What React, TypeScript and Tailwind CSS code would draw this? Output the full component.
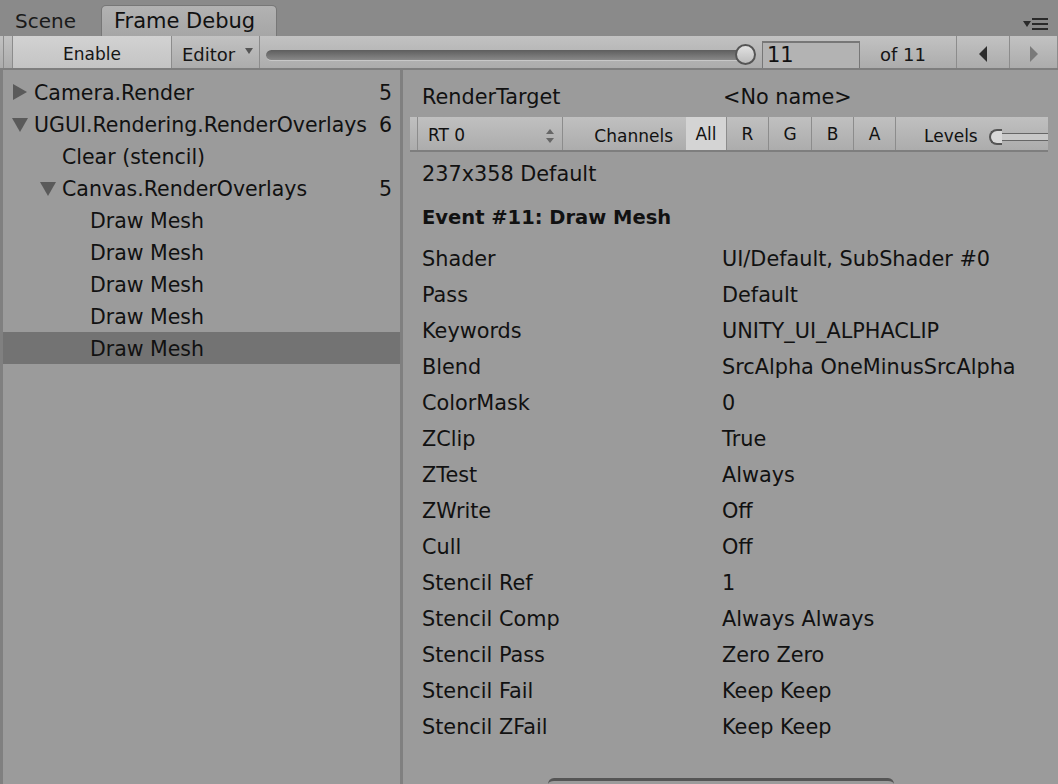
import React from 'react'

const font = { fontFamily: '"DejaVu Sans", "Liberation Sans", sans-serif' }

const tree = [
    { label: 'Camera.Render', count: '5', depth: 0, arrow: 'right' },
    { label: 'UGUI.Rendering.RenderOverlays', count: '6', depth: 0, arrow: 'down' },
    { label: 'Clear (stencil)', count: '', depth: 1, arrow: '' },
    { label: 'Canvas.RenderOverlays', count: '5', depth: 1, arrow: 'down' },
    { label: 'Draw Mesh', count: '', depth: 2, arrow: '' },
    { label: 'Draw Mesh', count: '', depth: 2, arrow: '' },
    { label: 'Draw Mesh', count: '', depth: 2, arrow: '' },
    { label: 'Draw Mesh', count: '', depth: 2, arrow: '' },
    { label: 'Draw Mesh', count: '', depth: 2, arrow: '', selected: true },
]

const props: [string, string][] = [
    ['Shader', 'UI/Default, SubShader #0'],
    ['Pass', 'Default'],
    ['Keywords', 'UNITY_UI_ALPHACLIP'],
    ['Blend', 'SrcAlpha OneMinusSrcAlpha'],
    ['ColorMask', '0'],
    ['ZClip', 'True'],
    ['ZTest', 'Always'],
    ['ZWrite', 'Off'],
    ['Cull', 'Off'],
    ['Stencil Ref', '1'],
    ['Stencil Comp', 'Always Always'],
    ['Stencil Pass', 'Zero Zero'],
    ['Stencil Fail', 'Keep Keep'],
    ['Stencil ZFail', 'Keep Keep'],
]

function Arrow({ dir }: { dir: string }) {
    if (!dir) return <span className="w-[22px] shrink-0" />
    return (
        <svg width="22" height="20" viewBox="0 0 22 20" className="shrink-0">
            {dir === 'right' ? (
                <polygon points="1,2 15,10 1,18" fill="#5a5a5a" />
            ) : (
                <polygon points="0,4 16,4 8,18" fill="#5a5a5a" />
            )}
        </svg>
    )
}

function TreeRow({ item }: { item: (typeof tree)[number] }) {
    const pad = item.depth === 0 ? 'pl-[9px]' : item.depth === 1 ? 'pl-[37px]' : 'pl-[65px]'
    return (
        <div className={`flex h-[32px] items-center pr-[8px] ${pad} ${item.selected ? 'bg-[#737373]' : ''}`}>
            <Arrow dir={item.arrow} />
            <span className="text-[20.5px] text-[#111] whitespace-nowrap pt-[2px]">{item.label}</span>
            <span className="ml-auto text-[20.5px] text-[#111] pt-[2px]">{item.count}</span>
        </div>
    )
}

export default function App() {
    return (
        <div className="w-[1058px] h-[784px] overflow-hidden bg-[#9b9b9b] flex flex-col select-none" style={font}>
            {/* Tab bar */}
            <div className="h-[36px] bg-[#8a8a8a] flex items-end relative shrink-0">
                <div className="h-[31px] pl-[15px] w-[101px] flex items-center text-[20px] text-[#1a1a1a]">Scene</div>
                <div className="h-[31px] w-[176px] rounded-t-[5px] border border-b-0 border-[#777] bg-gradient-to-b from-[#b2b2b2] to-[#a6a6a6] flex items-center pl-[12px] pt-[1px] text-[21px] text-[#111]">
                    Frame Debug
                </div>
                <div className="absolute right-[10px] top-[18px] flex items-center gap-[1px]">
                    <svg width="8" height="6" viewBox="0 0 8 6"><polygon points="0,0 8,0 4,6" fill="#2a2a2a" /></svg>
                    <svg width="16" height="12" viewBox="0 0 16 12">
                        <rect x="0" y="0" width="16" height="2" fill="#2a2a2a" />
                        <rect x="0" y="5" width="16" height="2" fill="#2a2a2a" />
                        <rect x="0" y="10" width="16" height="2" fill="#2a2a2a" />
                    </svg>
                </div>
            </div>

            {/* Toolbar */}
            <div className="h-[34px] shrink-0 flex bg-gradient-to-b from-[#c2c2c2] to-[#acacac] border-b-[2px] border-[#7e7e7e]">
                <div className="w-[10px] ml-[3px] border-x border-[#8c8c8c]" />
                <div className="w-[159px] flex items-center justify-center pt-[5px] bg-gradient-to-b from-[#d2d2d2] to-[#c4c4c4] border-r border-[#8c8c8c] text-[17px] text-[#151515]">
                    Enable
                </div>
                <div className="w-[88px] flex items-center pl-[10px] pt-[4px] gap-[10px] border-r border-[#8c8c8c] text-[18px] text-[#151515]">
                    Editor
                    <svg width="8" height="6" viewBox="0 0 8 6" className="-mt-[6px]"><polygon points="0,0 8,0 4,6" fill="#555" /></svg>
                </div>
                <div className="w-[500px] flex items-center pl-[6px] pr-[6px] pt-[6px]">
                    <div className="relative flex-1 h-[11px] rounded-full bg-gradient-to-b from-[#5e5e5e] to-[#888] border-b border-[#c8c8c8]">
                        <div className="absolute right-[-2px] top-[-6px] w-[21px] h-[21px] rounded-full border-[2px] border-[#555] bg-gradient-to-b from-[#e2e2e2] to-[#bcbcbc]" />
                    </div>
                </div>
                <div className="w-[98px] mt-[5px] ml-[2px] bg-[#b3b3b3] border-t-[2px] border-x border-[#777] flex items-center pl-[4px] text-[21px] text-[#111]">
                    11
                </div>
                <div className="w-[97px] flex items-center justify-end pr-[30px] pt-[4px] border-r border-[#8c8c8c] text-[18px] text-[#151515]">
                    of 11
                </div>
                <div className="w-[53px] flex items-center justify-center pt-[3px] border-r border-[#8c8c8c]">
                    <svg width="10" height="16" viewBox="0 0 10 16"><polygon points="9,0 9,16 1,8" fill="#2e2e2e" /></svg>
                </div>
                <div className="w-[48px] flex items-center justify-center pt-[3px] border-r border-[#8c8c8c]">
                    <svg width="10" height="16" viewBox="0 0 10 16"><polygon points="1,0 1,16 9,8" fill="#7a7a7a" /></svg>
                </div>
            </div>

            {/* Main */}
            <div className="flex flex-1 min-h-0">
                {/* Event tree */}
                <div className="w-[403px] shrink-0 border-l-[3px] border-r-[3px] border-[#808080] pt-[6px] flex flex-col">
                    {tree.map((t, i) => (
                        <TreeRow key={i} item={t} />
                    ))}
                </div>

                {/* Details */}
                <div className="flex-1 flex flex-col pt-[11px] relative text-[#111]">
                    <div className="flex h-[34px] items-center pl-[19px] text-[20.8px]">
                        <span className="w-[301px]">RenderTarget</span>
                        <span>&lt;No name&gt;</span>
                    </div>
                    <div className="ml-[7px] mr-[10px] mt-[2px] h-[35px] flex bg-gradient-to-b from-[#c0c0c0] to-[#acacac] border-b-[2px] border-[#7e7e7e] text-[17px]">
                        <div className="w-[8px] border-r border-[#8c8c8c]" />
                        <div className="w-[145px] flex items-center pl-[10px] pr-[8px] pt-[4px] border-r border-[#8c8c8c]">
                            RT 0
                            <svg className="ml-auto" width="8" height="14" viewBox="0 0 8 14">
                                <polygon points="4,0 8,5 0,5" fill="#666" />
                                <polygon points="0,9 8,9 4,14" fill="#666" />
                            </svg>
                        </div>
                        <div className="w-[123px] flex items-center pt-[7px] justify-end pr-[13px]">Channels</div>
                        <div className="w-[41px] flex items-center justify-center pt-[3px] bg-[#d4d4d4] border-r border-[#8c8c8c]">All</div>
                        <div className="w-[42px] flex items-center justify-center pt-[3px] border-r border-[#8c8c8c]">R</div>
                        <div className="w-[43px] flex items-center justify-center pt-[3px] border-r border-[#8c8c8c]">G</div>
                        <div className="w-[42px] flex items-center justify-center pt-[3px] border-r border-[#8c8c8c]">B</div>
                        <div className="w-[42px] flex items-center justify-center pt-[3px] border-r border-[#8c8c8c]">A</div>
                        <div className="flex-1 flex items-center pt-[7px] pl-[28px] relative">
                            Levels
                            <div className="absolute left-[93px] top-[12px] right-0 h-[16px] flex items-center">
                                <div className="w-[13px] h-[16px] rounded-l-full border-[2px] border-r-0 border-[#555] bg-[#d8d8d8]" />
                                <div className="flex-1 h-[8px] border-y border-[#666] bg-[#c8c8c8]" />
                            </div>
                        </div>
                    </div>
                    <div className="h-[40px] flex items-center pl-[19px] text-[20.8px] mt-[3px]">237x358 Default</div>
                    <div className="h-[46px] flex items-center pl-[19px] text-[19.5px] font-bold">Event #11: Draw Mesh</div>
                    <div className="flex flex-col pl-[19px] mt-[1px]">
                        {props.map(([k, v]) => (
                            <div key={k} className="h-[36px] flex items-center text-[20.8px]">
                                <span className="w-[300px] shrink-0">{k}</span>
                                <span>{v}</span>
                            </div>
                        ))}
                    </div>
                    <div className="absolute left-[145px] w-[346px] bottom-[-10px] h-[16px] rounded-t-[6px] border-t-[3px] border-[#555]" />
                </div>
            </div>
        </div>
    )
}
